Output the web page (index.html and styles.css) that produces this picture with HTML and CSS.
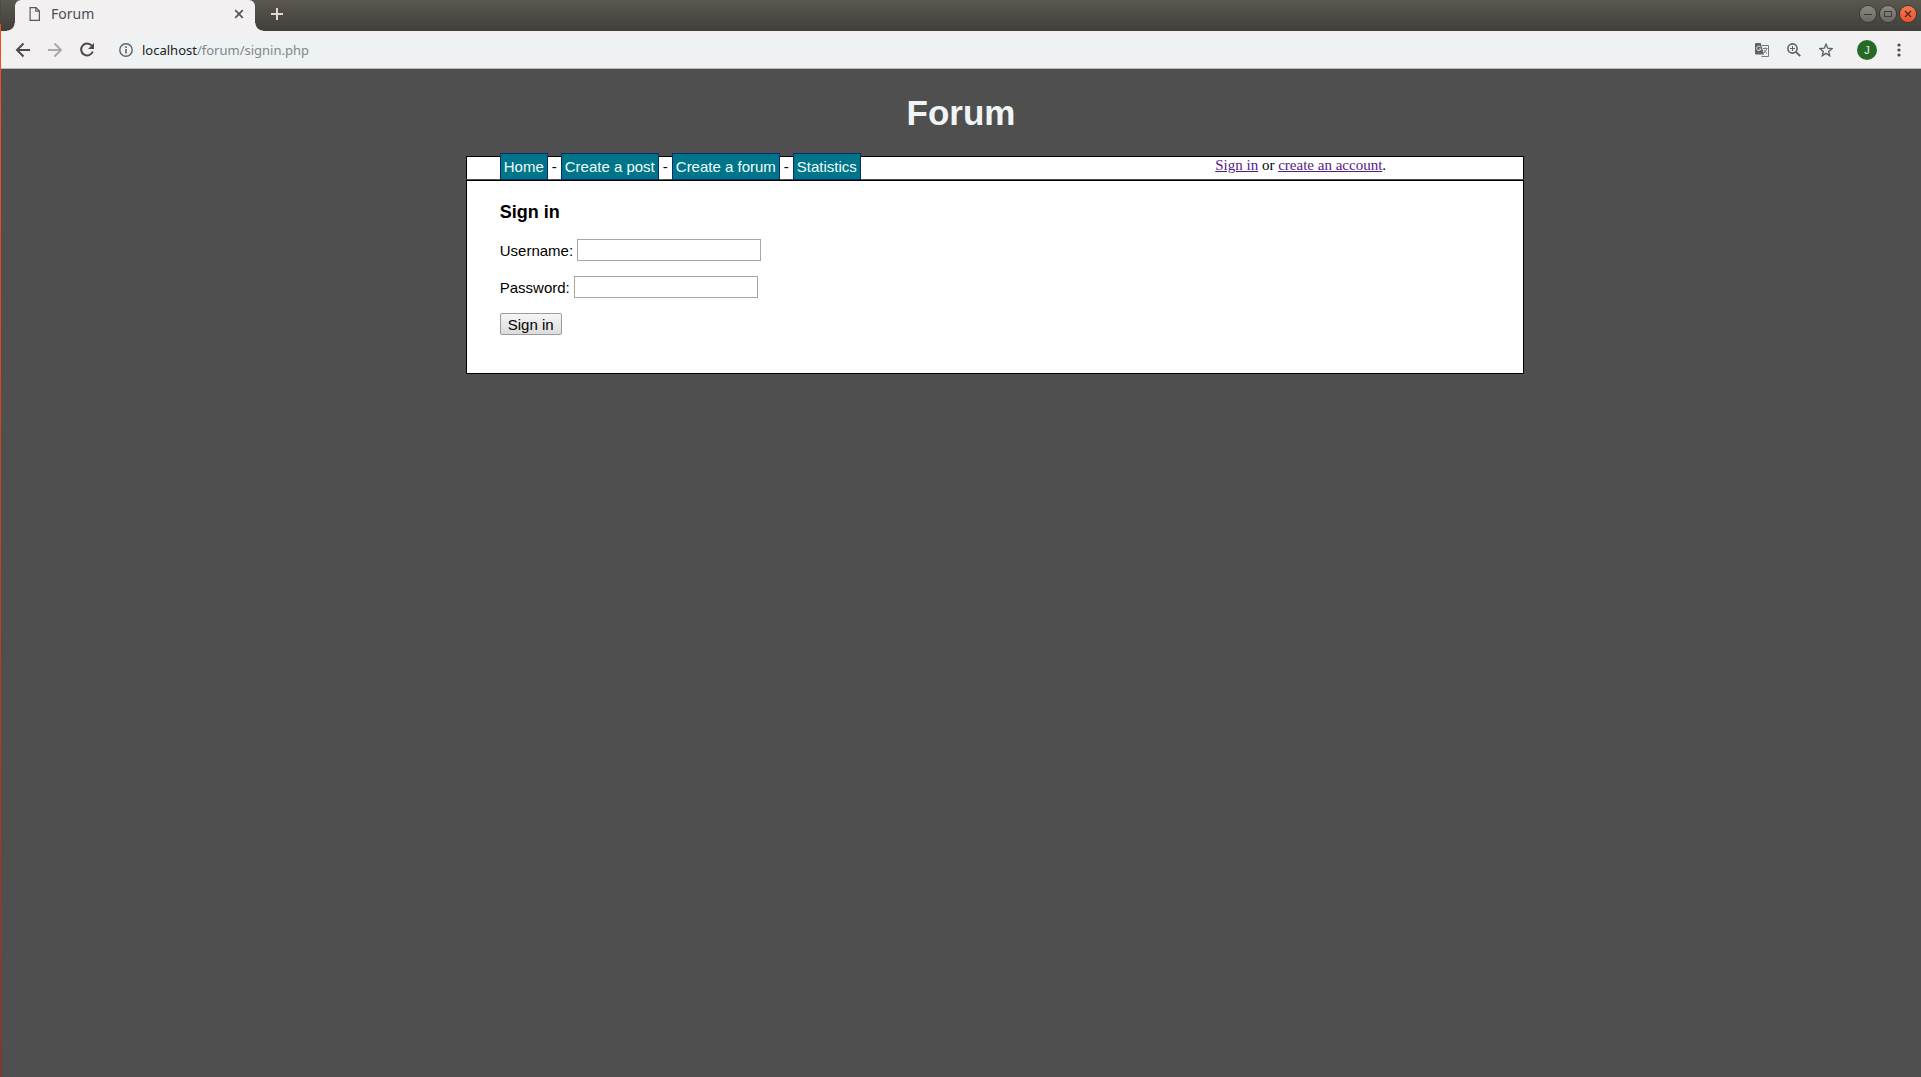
FILE: index.html
```html
<!DOCTYPE html>
<html lang="en">
<head>
<meta charset="utf-8">
<title>Forum</title>
<link rel="stylesheet" href="styles.css">
</head>
<body>
<div class="window">
  <header class="tab-strip">
    <div class="tab">
      <svg class="tab-icon" width="12" height="16" viewBox="0 0 12 16" fill="none" stroke="#5a5a5a" stroke-width="1.2"><path d="M1.1 1.6H7L10.4 5V14.4H1.1Z"/><path d="M6.8 1.6V5.2H10.4"/></svg>
      <span class="tab-title">Forum</span>
      <button class="icon-button" aria-label="Close tab"><svg width="10" height="10" viewBox="0 0 10 10" stroke="#55555a" stroke-width="1.7"><path d="M1.2 1.2L8.8 8.8M8.8 1.2L1.2 8.8"/></svg></button>
    </div>
    <button class="icon-button new-tab" aria-label="New tab"><svg width="12" height="12" viewBox="0 0 12 12" stroke="#dfdbd2" stroke-width="2"><path d="M6 0V12M0 6H12"/></svg></button>
    <div class="window-controls">
      <button class="control" aria-label="Minimize"><svg width="16" height="16" viewBox="0 0 16 16"><path d="M4 8.5H12" stroke="#3c3b37" fill="none"/></svg></button>
      <button class="control" aria-label="Maximize"><svg width="16" height="16" viewBox="0 0 16 16"><path d="M4.5 5.5H11.5V10.5H4.5Z" stroke="#3c3b37" fill="none"/></svg></button>
      <button class="control control-close" aria-label="Close"><svg width="16" height="16" viewBox="0 0 16 16"><path d="M5 5L11 11M11 5L5 11" stroke="#4a2a1c" stroke-width="1.3" fill="none"/></svg></button>
    </div>
  </header>
  <div class="toolbar">
    <button class="icon-button" aria-label="Back"><svg width="16" height="16" viewBox="0 0 16 16" fill="none" stroke="#4b4b4b" stroke-width="2"><path d="M15 8H2.5M8.5 1.5L2 8L8.500 14.500"/></svg></button>
    <button class="icon-button" aria-label="Forward"><svg width="16" height="16" viewBox="0 0 16 16" fill="none" stroke="#aaa8a9" stroke-width="2"><path d="M1 8H13.500M7.500 1.500L14 8L7.500 14.500"/></svg></button>
    <button class="icon-button" aria-label="Reload"><svg width="16" height="16" viewBox="0 0 16 16" fill="none" stroke="#4b4b4b" stroke-width="2"><path d="M12.800 3.700A6 6 0 1 0 13.800 9.500"/><path d="M15 1V7H9Z" fill="#4b4b4b" stroke="none"/></svg></button>
    <div class="omnibox">
      <svg width="14" height="14" viewBox="0 0 14 14" fill="none" stroke="#5f6368"><circle cx="7" cy="7" r="6.200" stroke-width="1.400"/><path d="M7 6V10.500M7 3.300V4.900" stroke-width="1.600"/></svg>
      <span class="url"><span class="host">localhost</span>/forum/signin.php</span>
      <div class="page-actions">
        <button class="icon-button" aria-label="Translate"><svg width="14" height="14" viewBox="0 0 14 14"><path d="M7 2.500H13.500V13.500H6.500" fill="none" stroke="#777a7e"/><path d="M1 0H5.700L9 11.500H1Q0 11.500 0 10.500V1Q0 0 1 0Z" fill="#5f6368"/><path d="M5.800 4.300A2.200 2.200 0 1 0 6 6H4" fill="none" stroke="#eef2f3"/><path d="M8 5.500H12.500M10.200 4.500V5.500M11.800 5.500Q11 8.500 8.800 10M9 7Q10 9 12 10.500" fill="none" stroke="#777a7e"/></svg></button>
        <button class="icon-button" aria-label="Zoom"><svg width="14" height="14" viewBox="0 0 14 14" fill="none" stroke="#5f6368"><circle cx="5.500" cy="5.500" r="4.600" stroke-width="1.600"/><path d="M8.900 8.900L13.200 13.200" stroke-width="1.900"/><path d="M5.500 3V8M3 5.500H8" stroke-width="1"/></svg></button>
        <button class="icon-button" aria-label="Bookmark this page"><svg width="14" height="14" viewBox="0 0 14 14" fill="none" stroke="#5f6368" stroke-width="1.400"><path d="M7 1.300L8.700 5.200L13 5.600L9.700 8.400L10.700 12.700L7 10.400L3.300 12.700L4.300 8.400L1 5.600L5.300 5.200Z"/></svg></button>
      </div>
    </div>
    <button class="avatar" aria-label="Profile">J</button>
    <button class="icon-button" aria-label="Menu"><svg width="4" height="14" viewBox="0 0 4 14" fill="#4b4b4b"><circle cx="2" cy="2" r="1.600"/><circle cx="2" cy="7" r="1.600"/><circle cx="2" cy="12" r="1.600"/></svg></button>
  </div>
  <div class="page">
    <h1>Forum</h1>
    <div class="content">
      <nav class="menu">
        <div class="menu-links"><a href="#">Home</a> - <a href="#">Create a post</a> - <a href="#">Create a forum</a> - <a href="#">Statistics</a></div>
        <div class="account"><a href="#">Sign in</a> or <a href="#">create an account</a>.</div>
      </nav>
      <main class="panel">
        <h2>Sign in</h2>
        <form class="sign-in">
          <div class="field"><label for="username">Username:</label><input id="username" type="text"></div>
          <div class="field"><label for="password">Password:</label><input id="password" type="password"></div>
          <button class="submit" type="submit">Sign in</button>
        </form>
      </main>
    </div>
  </div>
</div>
</body>
</html>
```
FILE: styles.css
```css
* { box-sizing: border-box; }

body {
  margin: 0;
  padding-left: 1px;
  min-height: 100vh;
  display: flex;
  background: linear-gradient(#4a4943 24px, #f0500f 24px, #e95420 10%, #b3201a);
  font-family: "Liberation Sans", Arial, sans-serif;
  font-size: 15px;
}

button { font-family: inherit; cursor: pointer; }

.window {
  flex: 1;
  display: flex;
  flex-direction: column;
}

/* Browser frame */
.tab-strip {
  display: flex;
  align-items: flex-start;
  height: 31px;
  background: linear-gradient(#5a574e, #403f3a);
  font-family: "Noto Sans", sans-serif;
}

.tab {
  display: flex;
  align-items: center;
  width: 240px;
  height: 31px;
  margin-left: 14px;
  padding: 0 11px 4px 14px;
  background: #f2f0f1;
  border-radius: 6px 6px 0 0;
  position: relative;
}

.tab::before,
.tab::after {
  content: "";
  position: absolute;
  bottom: 0;
  width: 8px;
  height: 8px;
}

.tab::before {
  left: -8px;
  background: radial-gradient(circle at 0 0, transparent 7px, #f2f0f1 8px);
}

.tab::after {
  right: -8px;
  background: radial-gradient(circle at 100% 0, transparent 7px, #f2f0f1 8px);
}

.tab-title {
  flex: 1;
  margin-left: 10px;
  color: #4c4c50;
  font-size: 14px;
}

.icon-button {
  display: flex;
  padding: 0;
  border: 0;
  background: none;
}

.new-tab { margin: 8px 0 0 16px; }

.window-controls {
  display: flex;
  gap: 4px;
  margin: 6px 5px 0 auto;
}

.control {
  display: flex;
  padding: 0;
  width: 16px;
  height: 16px;
  border: 0;
  border-radius: 50%;
  background: linear-gradient(#8b8881, #6b6963);
  box-shadow: 0 0 0 1px #3a3935;
}

.control-close { background: linear-gradient(#f4794f, #e9532a); }

.toolbar {
  display: flex;
  align-items: center;
  gap: 16px;
  height: 38px;
  padding: 0 20px 0 14px;
  background: #f2f0f1;
  border-bottom: 1px solid #bab8b9;
}

.omnibox {
  flex: 1;
  display: flex;
  align-items: center;
  height: 28px;
  padding: 0 8px;
  border-radius: 14px;
  background: #eef2f3;
}

.url {
  flex: 1;
  margin-left: 9px;
  color: #80868b;
  font-family: "Noto Sans", sans-serif;
  font-size: 13px;
}

.host { color: #202124; }

.page-actions {
  display: flex;
  gap: 18px;
}

.avatar {
  width: 20px;
  height: 20px;
  margin-right: 4px;
  padding: 0;
  border: 0;
  border-radius: 50%;
  background: #266a28;
  color: #e8f0e8;
  font-size: 11px;
}

/* Forum page */
.page {
  flex: 1;
  background: #4f4f4f;
}

h1 {
  margin: 24px 0 23px;
  color: #f0f4f4;
  font-size: 35px;
  line-height: 40px;
  text-align: center;
}

.content {
  display: flex;
  flex-direction: column;
  align-items: center;
  gap: 1px;
  padding-left: 68px;
}

.menu,
.panel {
  width: calc(55vw + 2px);
  padding-left: 33px;
  border: 1px solid #000;
  background: #fff;
}

.menu {
  display: flex;
  height: 23px;
  border-bottom: 0;
  line-height: 17px;
}

.menu-links {
  flex: 1;
  display: flex;
  align-items: center;
  gap: 4px;
  height: 18px;
}

.menu-links a {
  padding: 4px 3px;
  border: 1px solid #0a2c6e;
  background: #007488;
  color: #f0ffff;
  text-decoration: none;
}

.account {
  width: 308px;
  font-family: "Liberation Serif", "Times New Roman", serif;
}

.account a { color: #551a8b; }

.panel {
  padding-top: 21px;
  padding-bottom: 38px;
}

h2 {
  margin: 0 0 16px;
  font-size: 18px;
  line-height: 21px;
}

.sign-in {
  display: flex;
  flex-direction: column;
  align-items: flex-start;
  gap: 15px;
}

.field {
  display: flex;
  align-items: center;
  gap: 4px;
}

.field input {
  width: 184px;
  height: 22px;
  padding: 1px;
  border: 1px solid #a6a6a6;
  font-size: 15px;
}

.submit {
  width: 62px;
  height: 22px;
  padding: 0;
  border: 1px solid #9b9b9b;
  border-radius: 2px;
  background: linear-gradient(#f6f6f6, #dcdcdc);
  color: #000;
  font-size: 15px;
}
```
